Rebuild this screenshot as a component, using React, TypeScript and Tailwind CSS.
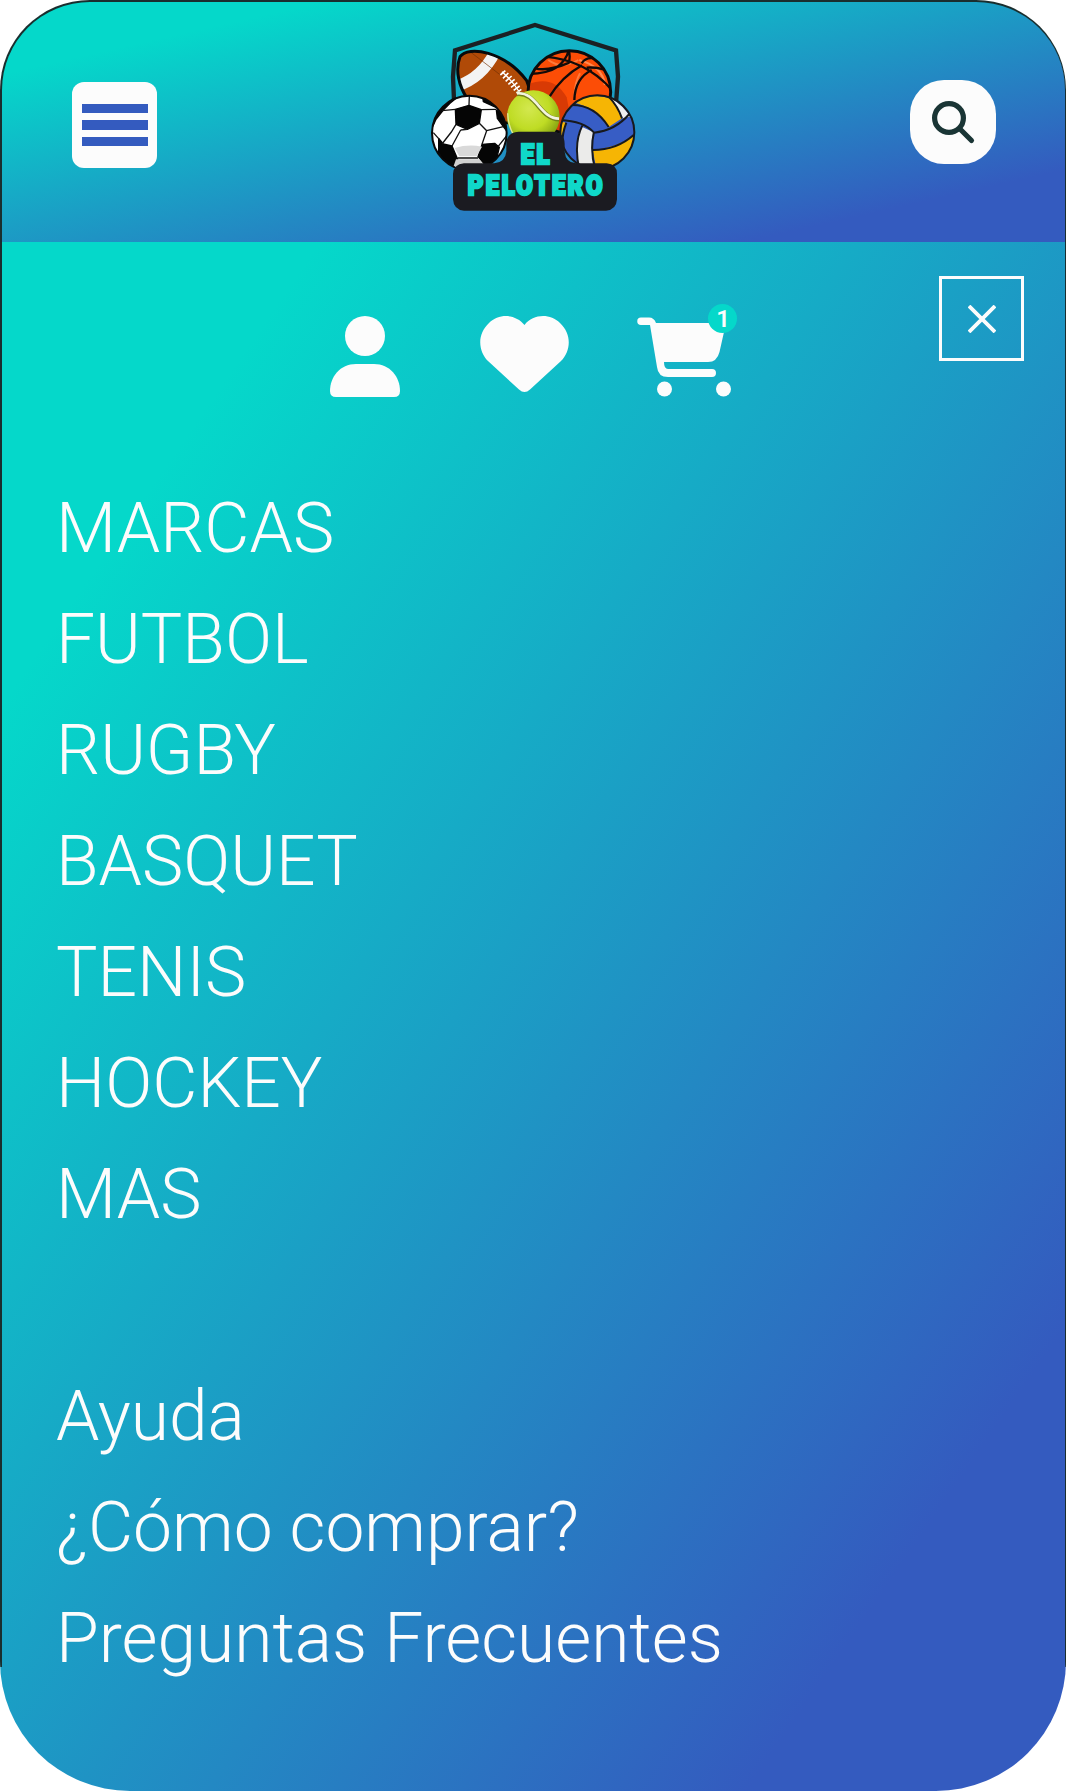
const sports = ["MARCAS", "FUTBOL", "RUGBY", "BASQUET", "TENIS", "HOCKEY", "MAS"];
const help = ["Ayuda", "¿Cómo comprar?", "Preguntas Frecuentes"];

function Logo() {
  return (
    <svg viewBox="0 0 690 630" className="h-[210px] w-[230px]" role="img" aria-label="El Pelotero">
      <defs>
        <clipPath id="soccer"><circle cx="148" cy="369" r="112" /></clipPath>
        <clipPath id="volley"><circle cx="532" cy="367" r="111" /></clipPath>
        <clipPath id="basket"><circle cx="448" cy="246" r="124" /></clipPath>
        <clipPath id="rugby"><path d="M120 140C145 105 255 125 320 212C350 285 310 345 250 338C165 330 90 220 120 140Z" /></clipPath>
        <radialGradient id="tennis" cx=".42" cy=".35" r=".65">
          <stop offset="0" stopColor="#d3e84f" />
          <stop offset=".6" stopColor="#bfdc24" />
          <stop offset="1" stopColor="#86a312" />
        </radialGradient>
      </defs>
      <path d="M102 270L99 200L105 121L345 45L588 121L594 200L588 280" fill="none" stroke="#1b2124" strokeWidth="13" />

      <g clipPath="url(#rugby)">
        <rect x="90" y="100" width="270" height="260" fill="#b04a07" />
        <path d="M110 228Q185 205 226 125" fill="none" stroke="#f3f3f3" strokeWidth="34" />
        <path d="M150 125L300 240M135 250L170 300" fill="none" stroke="#743005" strokeWidth="2" />
      </g>
      <path d="M120 140C145 105 255 125 320 212C350 285 310 345 250 338C165 330 90 220 120 140Z" fill="none" stroke="#08090b" strokeWidth="9" />
      <path d="M246 185Q275 210 298 246" fill="none" stroke="#fff" strokeWidth="4" />
      <path d="M241 195L256 182M249 205L265 189M257 214L275 198M265 223L284 208M273 232L292 218M281 241L299 228M289 249L304 238" stroke="#fff" strokeWidth="5" />

      <g clipPath="url(#basket)">
        <rect x="320" y="118" width="256" height="256" fill="#fc4d06" />
        <path d="M320 225Q400 190 440 262L460 370H320Z" fill="#d83a05" />
        <path d="M478 150Q548 170 555 225" fill="none" stroke="#ff8a50" strokeWidth="7" />
        <path d="M385 150Q425 180 475 150M463 260Q465 215 480 190" fill="none" stroke="#ff7a3c" strokeWidth="6" />
        <path d="M375 140Q500 150 580 245M446 120Q452 140 446 158M325 192Q385 190 410 172Q440 150 446 120M485 160Q500 135 540 150M345 175Q385 185 448 158M486 166Q425 200 385 265M515 180Q465 205 463 270M575 188Q540 170 500 173" fill="none" stroke="#130b09" strokeWidth="7" />
      </g>
      <circle cx="448" cy="246" r="124" fill="none" stroke="#0d0b0b" strokeWidth="9" />

      <g clipPath="url(#soccer)">
        <rect x="30" y="250" width="240" height="240" fill="#fff" />
        <g fill="#050505" stroke="#050505" strokeWidth="4" strokeLinejoin="round">
          <path d="M106 298L147 286L184 299L178 340L142 358L108 343Z" />
          <path d="M92 262L112 262L90 280L70 300L48 328L36 355L30 310ZM188 257L222 276L228 292L190 275ZM229 300L262 320L266 371L250 350L232 325ZM56 385L70 402L96 408L113 448L98 475L56 430ZM186 403L224 400L238 412L228 454L196 465L174 440Z" />
        </g>
        <path d="M147 286L148 258M106 298L66 302M184 299L228 298M108 343L94 366L66 402M142 358L122 360M178 340L200 362L186 403M200 362L250 350M40 368L58 388M234 410L262 375M122 360L96 408M113 444H174" fill="none" stroke="#111" strokeWidth="4" />
        <path d="M104 414Q145 402 186 410L170 439H118Z" fill="#d9d9d9" />
        <path d="M108 448H178L195 470H100Z" fill="#d0d0d0" />
      </g>
      <circle cx="148" cy="369" r="112" fill="none" stroke="#09090a" strokeWidth="6" />

      <circle cx="340" cy="320" r="79" fill="url(#tennis)" />
      <path d="M291 252C350 246 360 328 417 328" fill="none" stroke="#71801c" strokeWidth="13" />
      <path d="M291 250C350 244 360 326 417 326" fill="none" stroke="#f3f4df" strokeWidth="8" />
      <path d="M263 310Q264 345 280 374" fill="none" stroke="#dfe8a0" strokeWidth="4" />

      <g clipPath="url(#volley)">
        <rect x="415" y="250" width="235" height="235" fill="#375dc5" />
        <path d="M454 277Q500 248 568 264Q594 290 606 325L566 351Q530 290 454 277Z" fill="#f6b504" />
        <path d="M565 260Q610 284 630 320L606 325Q590 286 565 260Z" fill="#eee" />
        <path d="M415 333L438 338Q415 390 430 432L415 400Z" fill="#f6b504" />
        <path d="M485 350L519 366Q508 420 526 480H478Q458 400 485 350Z" fill="#ebebea" />
        <path d="M518 420Q590 415 643 374Q642 440 600 483L530 480Z" fill="#f6b504" />
        <path d="M446 285Q522 280 566 351M420 330Q492 333 522 368Q585 362 628 312M568 262Q593 288 606 325M519 420Q590 420 641 375M439 338Q418 394 434 440M487 347Q460 400 478 480M522 366Q509 420 526 480" fill="none" stroke="#17191d" strokeWidth="6" />
      </g>
      <circle cx="532" cy="367" r="111" fill="none" stroke="#17191d" strokeWidth="6" />

      <path d="M296 365H398Q434 367 434 402V425Q437 458 468 460H560Q591 462 591 492V568Q589 600 558 602H132Q101 600 99 568V492Q101 462 132 460H223Q256 456 259 425V402Q260 367 296 365Z" fill="#1b1b21" />
      <text fill="#0fd8c9" stroke="#0fd8c9" strokeWidth="8" fontFamily="Roboto, sans-serif" fontWeight="900" fontSize="84" letterSpacing="9">
        <tspan x="302" y="461" textLength="94" lengthAdjust="spacingAndGlyphs">EL</tspan>
        <tspan x="143" y="556" textLength="412" lengthAdjust="spacingAndGlyphs">PELOTERO</tspan>
      </text>
    </svg>
  );
}

function Header() {
  return (
    <header className="flex h-[242px] shrink-0 items-start justify-between rounded-t-[90px] border-t-2 border-r border-l-2 border-[#1a2e2e] bg-[linear-gradient(to_bottom_right,#05d8ca_15%,#345bbf_85%)] pr-[69px] pl-[70px]">
      <button aria-label="Menú" className="mt-20 flex h-[86px] w-[85px] flex-col items-center justify-center gap-[7px] rounded-xl bg-[#fcfcfc]">
        <span className="h-[9.5px] w-[66px] bg-[#345bbf]" />
        <span className="h-[9.5px] w-[66px] bg-[#345bbf]" />
        <span className="h-[9.5px] w-[66px] bg-[#345bbf]" />
      </button>
      <div className="mt-2 mr-[-3px]"><Logo /></div>
      <button aria-label="Buscar" className="mt-[78px] h-[84px] w-[86px] rounded-[34px] bg-[#fcfcfc]">
        <svg viewBox="0 0 86 84" className="h-[84px] w-[86px]" fill="none" stroke="#1a3535" strokeWidth="5.2" strokeLinecap="round">
          <circle cx="39" cy="38" r="14.4" />
          <path d="M50 49L61.5 60.500" />
        </svg>
      </button>
    </header>
  );
}

function QuickActions() {
  return (
    <div className="flex h-[92px] items-end pl-[329.5px] text-[#fcfcfc]">
      <svg viewBox="0 0 70 81" className="h-[81px] w-[70px]" fill="currentColor">
        <circle cx="35" cy="20" r="20" />
        <path d="M26 48H44C60 48 70 61 70 75Q70 81 64 81H6Q0 81 0 75C0 61 10 48 26 48Z" />
      </svg>
      <svg viewBox="0 0 89 81" className="ml-[80.5px] h-[81px] w-[89px]" fill="currentColor">
        <path d="M44.500 9C53-2 70-3 80 7C92 18 91 35 81 45L50 73.500Q44.500 78.500 39 73.500L8 45C-2 35-3 18 9 7C19-3 36-2 44.500 9Z" />
      </svg>
      <div className="relative ml-[68px] h-[92px] w-[101px]">
        <svg viewBox="0 0 101 92" className="h-[92px] w-[101px]" fill="currentColor">
          <path d="M4 12.500H12Q17 12.500 19 18H89L82.500 47Q80 57 71 57H27Q27 64 31 64H75A4 4 0 0 1 75 72H31Q21 72 20 62L13 20H4A3.750 3.750 0 0 1 4 12.500Z" />
          <circle cx="27.500" cy="84" r="7.500" />
          <circle cx="86.500" cy="84" r="7.500" />
        </svg>
        <span className="absolute top-[-1px] right-px flex size-[29px] items-center justify-center rounded-full bg-[#05d8ca] pl-px text-2xl leading-none font-semibold">1</span>
      </div>
    </div>
  );
}

function LinkList({ items }: { items: string[] }) {
  return (
    <ul>
      {items.map((item) => (
        <li key={item} className="h-[111px] text-[69.5px] leading-[111px] font-light whitespace-nowrap">{item}</li>
      ))}
    </ul>
  );
}

export default function App() {
  return (
    <div className="flex h-[1791px] w-[1066px] flex-col font-['Roboto',sans-serif] text-[#fcfcfc]">
      <Header />
      <main className="relative flex-1 overflow-hidden rounded-b-[130px] bg-[linear-gradient(to_bottom_right,#05d8ca_15%,#345bbf_85%)] pt-[63px]">
        <span className="absolute top-0 bottom-[124px] left-0 w-0.5 bg-[#1a2e2e]" />
        <span className="absolute top-0 right-0 bottom-[124px] w-px bg-[#1a2e2e]" />
        <QuickActions />
        <button aria-label="Cerrar" className="absolute top-[34px] right-[42px] flex size-[85px] items-center justify-center border-3 border-[#fcfcfc]">
          <svg viewBox="0 0 28 28" className="size-7" stroke="currentColor" strokeWidth="3.8"><path d="M1 1L27 27M27 1L1 27" /></svg>
        </button>
        <nav className="mt-[76px] pl-[56px]">
          <LinkList items={sports} />
          <div className="mt-[111px]"><LinkList items={help} /></div>
        </nav>
      </main>
    </div>
  );
}
